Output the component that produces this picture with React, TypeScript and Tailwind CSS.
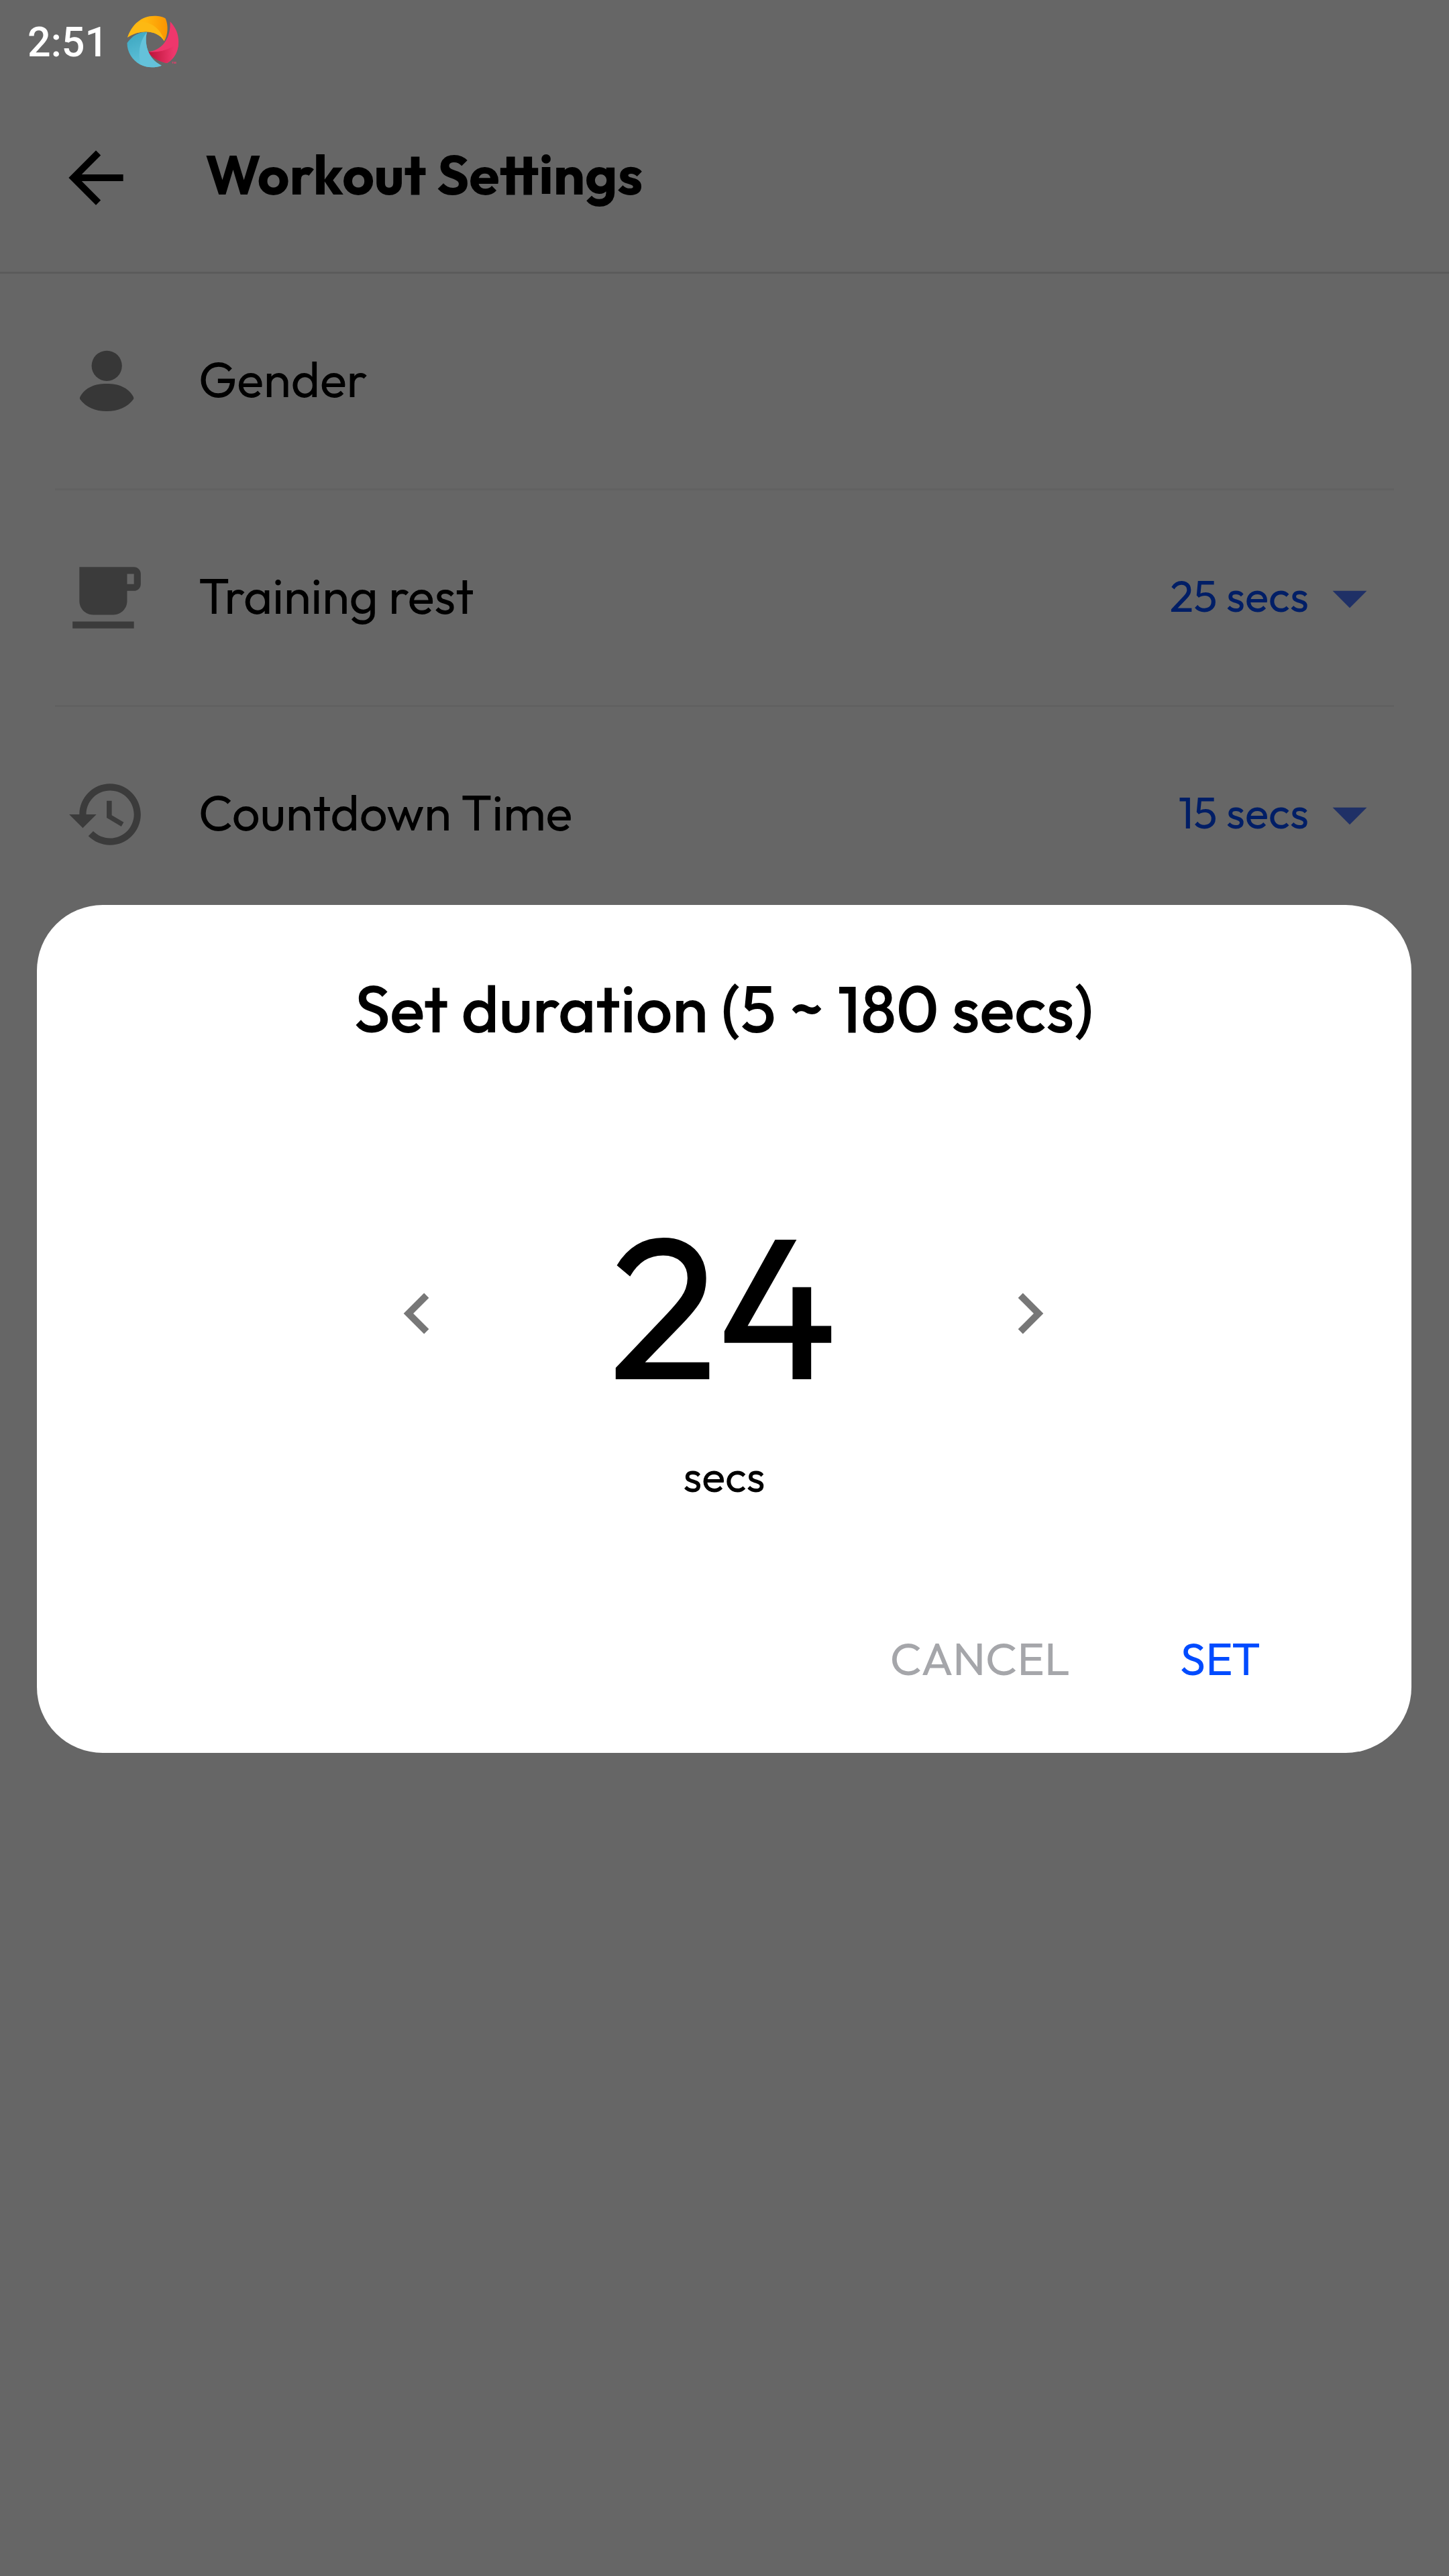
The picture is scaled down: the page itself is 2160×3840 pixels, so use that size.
import type { ReactNode } from "react";

function SwirlLogo() {
  return (
    <svg viewBox="567 67 233 234" className="h-[78px] w-[78px]">
      <defs>
        <linearGradient id="amber" x1="0" x2="1" y1="0" y2="0">
          <stop offset="0.45" stopColor="#ffb60f" />
          <stop offset="1" stopColor="#fb9400" />
        </linearGradient>
        <linearGradient id="crimson" x1="0" x2="1" y1="0" y2="0">
          <stop offset="0" stopColor="#b91237" />
          <stop offset="0.85" stopColor="#ee376c" />
        </linearGradient>
        <linearGradient id="teal" x1="0" x2="0.4" y1="0" y2="1">
          <stop offset="0" stopColor="#3aa5bf" />
          <stop offset="1" stopColor="#62c3da" />
        </linearGradient>
      </defs>
      <path fill="url(#amber)" d="M570 165C588 108 632 69 690 69C710 69 730 73 740 81C753 112 751 152 734 182C708 135 632 124 570 165Z" />
      <path fill="#fdb913" d="M570 165C580 135 600 110 628 94C682 98 722 132 734 182C708 135 632 124 570 165Z" />
      <path fill="#ee376c" d="M760 94C785 120 798 150 798 185C798 225 778 262 747 280C715 275 680 255 660 229C722 226 765 170 760 94Z" />
      <path fill="url(#crimson)" d="M660 229C705 236 755 222 797 190C798 228 778 262 747 280C712 276 680 257 660 229Z" />
      <path fill="url(#teal)" d="M657 141C643 190 660 262 722 291C690 303 655 301 625 286C590 266 568 230 568 190C590 158 620 140 657 141Z" />
      <path fill="#64c2da" d="M657 141C643 190 660 262 722 291C690 303 655 301 628 287C617 240 620 185 657 141Z" />
      <text x="767" y="282" fontSize="12" fontWeight="700" fill="#ee376c" fontFamily="Roboto, sans-serif" textLength="19">TM</text>
    </svg>
  );
}

function Icon({ d, className = "" }: { d: string; className?: string }) {
  return (
    <svg viewBox="0 0 24 24" className={`h-[122px] w-[122px] shrink-0 ${className}`} fill="currentColor">
      <path d={d} />
    </svg>
  );
}

const BACK = "M20 11H7.83l5.59-5.59L12 4l-8 8 8 8 1.41-1.41L7.83 13H20v-2z";
const CUP = "M20 3H4v10c0 2.21 1.79 4 4 4h6c2.21 0 4-1.79 4-4v-3h2c1.11 0 2-.9 2-2V5c0-1.11-.89-2-2-2zm0 5h-2V5h2v3zM2 21h18v-2H2v2z";
const HISTORY =
  "M13 3c-4.97 0-9 4.03-9 9H1l3.89 3.89.07.14L9 12H6c0-3.87 3.13-7 7-7s7 3.13 7 7-3.13 7-7 7c-1.93 0-3.68-.79-4.94-2.06l-1.42 1.42C8.27 19.99 10.51 21 13 21c4.97 0 9-4.03 9-9s-4.03-9-9-9zm-1 5v5l4.28 2.54.72-1.21-3.5-2.08V8H12z";
const DROPDOWN = "M7 10l5 5 5-5z";
const LEFT = "M15.41 7.41L14 6l-6 6 6 6 1.41-1.41L10.83 12z";
const RIGHT = "M10 6L8.59 7.41 13.17 12l-4.58 4.59L10 18l6-6z";

function PersonIcon() {
  return (
    <svg viewBox="0 0 122 122" className="h-[122px] w-[122px] shrink-0 text-[#373737]" fill="currentColor">
      <circle cx="61.2" cy="38.3" r="22.6" />
      <path d="M21.2 85C29 70 44 65 61 65S93 70 101 85Q101.600 86.500 101 88C92 100 78 106 61 106S30 100 21.200 88Q20.600 86.500 21.200 85Z" />
    </svg>
  );
}

function Row({ icon, label, value }: { icon: ReactNode; label: string; value?: string }) {
  return (
    <div className="flex h-[320px] items-center pr-[87px] pl-[98px]">
      {icon}
      <span className="ml-[76px] flex-1 pb-[5.6px] text-[74.2px] leading-none">{label}</span>
      {value && (
        <>
          <span className="pb-[4.6px] text-[65.4px] leading-none text-[#001e66]">{value}</span>
          <Icon d={DROPDOWN} className="text-[#1f3066]" />
        </>
      )}
    </div>
  );
}

const Divider = () => <div className="mx-[82px] h-[3px] bg-[#616161]" />;

export default function App() {
  return (
    <div className="relative h-[3840px] w-[2160px] overflow-hidden bg-[#666666] font-['Outfit','Lato',sans-serif] text-black">
      <div className="flex h-[123px] items-center pl-[41px]">
        <span className="w-[148px] pt-[4px] font-['Roboto',sans-serif] text-[61px] leading-none font-medium text-white">2:51</span>
        <SwirlLogo />
      </div>
      <header className="flex h-[282px] items-center pl-[82px]">
        <Icon d={BACK} className="mt-[2px]" />
        <h1 className="ml-[102px] pb-[7.4px] text-[82.8px] leading-none font-bold">Workout Settings</h1>
      </header>
      <div className="h-[3px] bg-[#5b5b5b]" />
      <main>
        <Row icon={<PersonIcon />} label="Gender" />
        <Divider />
        <Row icon={<Icon d={CUP} className="text-[#3b3b3b]" />} label="Training rest" value="25 secs" />
        <Divider />
        <Row icon={<Icon d={HISTORY} className="text-[#3b3b3b]" />} label="Countdown Time" value="15 secs" />
      </main>

      <div role="dialog" className="absolute top-[1349px] left-[55px] flex h-[1264px] w-[2049px] flex-col rounded-[98px] bg-white">
        <h2 className="mt-[105px] pr-[1px] text-center text-[96.9px] leading-[98px] font-medium">Set duration (5 ~ 180 secs)</h2>
        <div className="mt-[246px] ml-[506px] flex h-[297px] w-[1035px] items-center justify-between">
          <Icon d={LEFT} className="mt-[22px] text-[#777777]" />
          <span className="pb-[1px] text-[299.5px] leading-none">24</span>
          <Icon d={RIGHT} className="mt-[22px] text-[#777777]" />
        </div>
        <div className="mt-[73px] text-center text-[65px] leading-[65px]">secs</div>
        <div className="mt-[204px] flex justify-end gap-[164px] pr-[225px] text-[68.800px] leading-[69px]">
          <button className="text-[#a5a6aa]">CANCEL</button>
          <button className="text-[#004bff]">SET</button>
        </div>
      </div>
    </div>
  );
}
